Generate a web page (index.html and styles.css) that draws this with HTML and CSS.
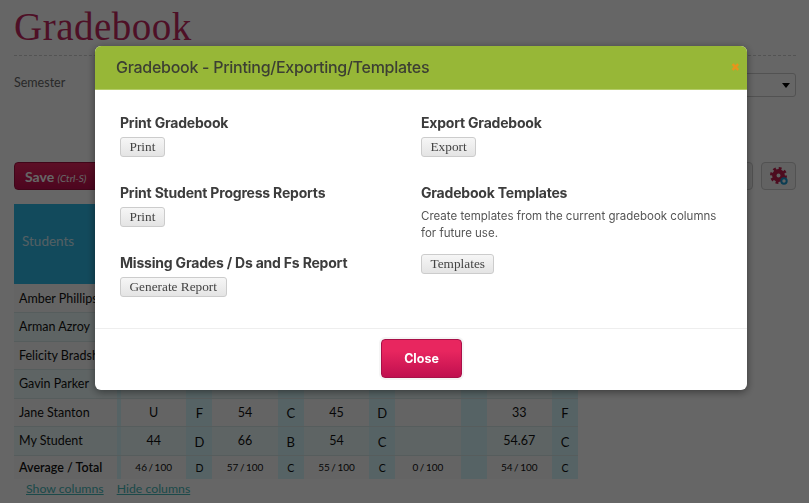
FILE: index.html
```html
<!DOCTYPE html>
<html lang="en">
<head>
<meta charset="utf-8">
<title>Gradebook</title>
<link rel="stylesheet" href="styles.css">
</head>
<body>
<main class="page">
  <h1 class="page-title">Gradebook</h1>
  <div class="filter-row">
    <span class="filter-label">Semester</span>
    <div class="select-box"><span class="caret"></span></div>
  </div>
  <div class="toolbar">
    <button class="save-btn">Save <em>(Ctrl-S)</em></button>
    <div class="tools">
      <div class="tool-btn wide"></div>
      <div class="tool-btn">
        <svg width="20" height="20" viewBox="0 0 20 20">
          <circle class="cog-body" cx="9.500" cy="9.500" r="4.200"/>
          <circle class="cog-teeth" cx="9.500" cy="9.500" r="7"/>
          <circle class="cog-dot" cx="15" cy="15" r="2.700"/>
        </svg>
      </div>
    </div>
  </div>
  <table class="grades">
    <colgroup>
      <col class="c-name"><col class="c-gap"><col class="c-score"><col class="c-letter"><col class="c-score"><col class="c-letter"><col class="c-score"><col class="c-letter"><col class="c-score"><col class="c-letter"><col class="c-score"><col class="c-letter">
    </colgroup>
    <thead>
      <tr class="head"><th class="name">Students</th><th class="ltr"></th><th></th><th class="ltr"></th><th></th><th class="ltr"></th><th></th><th class="ltr"></th><th></th><th class="ltr"></th><th></th><th class="ltr"></th></tr>
    </thead>
    <tbody>
      <tr class="r1"><td class="name">Amber Phillips</td><td class="ltr"></td><td></td><td class="ltr"></td><td></td><td class="ltr"></td><td></td><td class="ltr"></td><td></td><td class="ltr"></td><td></td><td class="ltr"></td></tr>
      <tr class="r2"><td class="name">Arman Azroy</td><td class="ltr"></td><td></td><td class="ltr"></td><td></td><td class="ltr"></td><td></td><td class="ltr"></td><td></td><td class="ltr"></td><td></td><td class="ltr"></td></tr>
      <tr class="r1"><td class="name">Felicity Bradshaw</td><td class="ltr"></td><td></td><td class="ltr"></td><td></td><td class="ltr"></td><td></td><td class="ltr"></td><td></td><td class="ltr"></td><td></td><td class="ltr"></td></tr>
      <tr class="r2"><td class="name">Gavin Parker</td><td class="ltr"></td><td></td><td class="ltr"></td><td></td><td class="ltr"></td><td></td><td class="ltr"></td><td></td><td class="ltr"></td><td></td><td class="ltr"></td></tr>
      <tr class="r1"><td class="name">Jane Stanton</td><td class="ltr"></td><td>U</td><td class="ltr">F</td><td>54</td><td class="ltr">C</td><td>45</td><td class="ltr">D</td><td></td><td class="ltr"></td><td>33</td><td class="ltr">F</td></tr>
      <tr class="r2"><td class="name">My Student</td><td class="ltr"></td><td>44</td><td class="ltr">D</td><td>66</td><td class="ltr">B</td><td>54</td><td class="ltr">C</td><td></td><td class="ltr"></td><td>54.67</td><td class="ltr">C</td></tr>
      <tr class="avg"><td class="name">Average / Total</td><td class="ltr"></td><td>46 / 100</td><td class="ltr">D</td><td>57 / 100</td><td class="ltr">C</td><td>55 / 100</td><td class="ltr">C</td><td>0 / 100</td><td class="ltr"></td><td>54 / 100</td><td class="ltr">C</td></tr>
    </tbody>
  </table>
  <div class="col-links"><a href="#">Show columns</a><a href="#">Hide columns</a></div>
</main>

<div class="overlay"></div>

<section class="modal">
  <header class="modal-head">
    <h2>Gradebook - Printing/Exporting/Templates</h2>
    <span class="modal-x">&#10006;</span>
  </header>
  <div class="modal-body">
    <div class="modal-col">
      <div class="block">
        <h3>Print Gradebook</h3>
        <button class="plain-btn">Print</button>
      </div>
      <div class="block">
        <h3>Print Student Progress Reports</h3>
        <button class="plain-btn">Print</button>
      </div>
      <div class="block">
        <h3>Missing Grades / Ds and Fs Report</h3>
        <button class="plain-btn">Generate Report</button>
      </div>
    </div>
    <div class="modal-col">
      <div class="block">
        <h3>Export Gradebook</h3>
        <button class="plain-btn">Export</button>
      </div>
      <div class="block">
        <h3>Gradebook Templates</h3>
        <p>Create templates from the current gradebook columns for future use.</p>
        <button class="plain-btn">Templates</button>
      </div>
    </div>
  </div>
  <footer class="modal-foot">
    <button class="close-btn">Close</button>
  </footer>
</section>
</body>
</html>
```
FILE: styles.css
```css
* { box-sizing: border-box; }
html, body { margin: 0; height: 100%; overflow: hidden; }
body { background: #fff; color: #444; font-family: "Lato", "Liberation Sans", sans-serif; font-size: 13px; }

.page { padding: 0 13px 0 14px; }
.page-title {
  margin: 0; height: 56px; padding-top: 5px;
  font: 400 39px/44px "Liberation Serif", serif;
  letter-spacing: .5px; color: #c42a5f;
  border-bottom: 1px dashed #d0d0d0;
}
.filter-row { display: flex; justify-content: space-between; padding-top: 17px; height: 106px; }
.filter-label { font-size: 12.500px; line-height: 19px; color: #666; }
.select-box {
  width: 300px; height: 24px; border: 1px solid #ccc; border-radius: 3px;
  display: flex; align-items: center; justify-content: flex-end; padding-right: 5px;
}
.caret { border: 4px solid transparent; border-top: 5px solid #000; border-bottom: 0; }

.toolbar { display: flex; justify-content: space-between; height: 42px; }
.save-btn {
  width: 200px; height: 28px; padding: 0 0 0 10px; text-align: left; color: #fff; border: 1px solid #a01040; border-radius: 4px;
  background: linear-gradient(#e8265f, #c00f4f); font: 700 14px "Lato", "Liberation Sans", sans-serif;
}
.save-btn em { font-size: 10px; font-weight: 400; }
.tools { display: flex; gap: 8px; }
.tool-btn {
  width: 35px; height: 28px; border: 1px solid #ccc; border-radius: 4px; background: #f4f4f4;
  display: flex; align-items: center; justify-content: center;
}
.tool-btn.wide { width: 60px; }
.cog-body { fill: none; stroke: #c0204f; stroke-width: 4.400; }
.cog-teeth { fill: none; stroke: #c0204f; stroke-width: 3; stroke-dasharray: 2.750 2.750; }
.cog-dot { fill: #f4f4f4; stroke: #1b9ad0; stroke-width: 2; }

.grades { border-collapse: collapse; table-layout: fixed; width: 564px; }
.c-name { width: 103px; }
.c-gap { width: 4px; }
.c-score { width: 65.400px; }
.c-letter { width: 26px; }
.grades th, .grades td { padding: 0; text-align: center; font-size: 12.500px; color: #111; }
.grades .name { text-align: left; padding-left: 5px; white-space: nowrap; overflow: hidden; }
.head th { height: 80px; background: #2fb8e6; }
.grades .head th.name { font-weight: 400; font-size: 13.500px; color: #cfeef8; padding: 0 0 7px 8px; }
.grades tr.r1 td { height: 28.500px; background: #fafafa; border-bottom: 1px solid #d8e8e8; }
.grades tr.r2 td { height: 28.500px; background: #ecfafa; border-bottom: 1px solid #d8e8e8; }
.grades tr.avg td { height: 24px; background: #fafafa; font-size: 10px; word-spacing: -1px; }
.grades tr.avg td.name { font-size: 12.500px; font-weight: 600; word-spacing: 0; }
.grades tr td.ltr, .grades tr th.ltr { background: #d7f8fc; font-size: 13px; padding-top: 2px; }
.grades tr.avg td.ltr { font-size: 10.500px; }
.col-links { display: flex; gap: 13px; padding: 2px 0 0 12px; }
.col-links a { color: #46b8b8; font-size: 12.300px; line-height: 16px; }

.overlay { position: fixed; inset: 0; background: rgba(0, 0, 0, .6); }

.modal {
  position: fixed; left: 95px; top: 46px; width: 652px; height: 344px;
  background: #fff; border-radius: 6px; overflow: hidden;
  box-shadow: 0 2px 8px rgba(0, 0, 0, .45);
  display: flex; flex-direction: column;
}
.modal-head {
  height: 44px; flex: none; background: #97b737; border-bottom: 1px solid #b4cc68;
  display: flex; align-items: center; justify-content: space-between; padding: 0 7px 1px 21px;
}
.modal-head h2 { margin: 0; font: 500 16px/1 "Inter", sans-serif; color: #3c3f33; letter-spacing: -.28px; }
.modal-x { color: #e8941a; font-size: 11px; font-family: "DejaVu Sans", sans-serif; line-height: 1; }
.modal-body { flex: 1; display: flex; padding: 24px 25px 0; }
.modal-col { flex: 0 0 301px; }
.modal-col h3 { margin: 0 0 5px; font: 700 14px/18px "Inter", sans-serif; letter-spacing: -.2px; color: #3c3c3c; }
.block { min-height: 70px; }
.block p { margin: 0 0 12px; padding-top: 1px; font: 400 11.500px/17px "Inter", sans-serif; color: #555; }
.plain-btn {
  display: block; height: 20px; padding: 0 8.500px; border: 1px solid #ccc; border-radius: 3px;
  background: linear-gradient(#f6f6f6, #e4e4e4); color: #444;
  font: 400 13.300px/18px "Liberation Serif", serif;
}
.modal-foot {
  height: 62px; flex: none; border-top: 1px solid #eee;
  display: flex; justify-content: center; padding-top: 10px;
}
.close-btn {
  width: 81px; height: 39px; margin-left: 1px; border: 1px solid #a81048; border-radius: 4px; color: #fff;
  background: linear-gradient(#e8265f 30%, #c00f4f);
  font: 700 12.500px "Inter", sans-serif;
  box-shadow: 0 0 0 2px #f5f5f5;
}
```
